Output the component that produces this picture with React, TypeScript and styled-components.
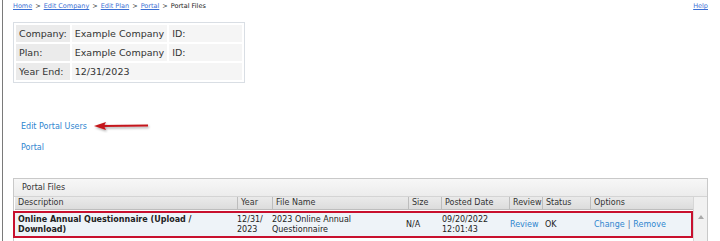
import styled, { createGlobalStyle } from "styled-components";

const GlobalStyle = createGlobalStyle`
  html, body {
    margin: 0;
    padding: 0;
    background: #ffffff;
    font-family: "DejaVu Sans", Verdana, sans-serif;
    color: #222;
  }
`;

const Page = styled.div`
  margin-left: 2px;
  border-left: 1px solid #7a7a7a;
  height: 241px;
  padding: 0 12px 0 10px;
  box-sizing: border-box;
  overflow: hidden;
`;

const TopBar = styled.div`
  display: flex;
  justify-content: space-between;
  align-items: center;
  height: 12px;
  font-size: 6.5px;
  color: #222;
`;

const Crumbs = styled.div`
  display: flex;
  gap: 3px;
  align-items: center;
`;

const CrumbLink = styled.a`
  color: #3b6fd4;
  text-decoration: underline;
`;

const InfoTable = styled.table`
  margin-top: 10px;
  border: 1px solid #d9dee4;
  border-spacing: 2px;
  font-size: 9.5px;
  color: #333;
  width: 232px;
  td {
    height: 17px;
    padding: 0 3px;
    white-space: nowrap;
    background: #f5f5f5;
  }
`;

const LabelCell = styled.td<{ $w: number }>`
  && {
    background: #ebebeb;
  }
  width: ${(p) => p.$w}px;
`;

const ValueCell = styled.td<{ $w?: number }>`
  width: ${(p) => (p.$w ? `${p.$w}px` : "auto")};
`;

const Links = styled.div`
  margin-top: 39px;
  padding-left: 8px;
  display: flex;
  flex-direction: column;
  gap: 11px;
`;

const LinkRow = styled.div`
  display: flex;
  align-items: center;
  gap: 6px;
  height: 10px;
`;

const BlueLink = styled.a`
  color: #2f86cf;
  font-size: 8px;
  line-height: 10px;
  text-decoration: none;
`;

const Panel = styled.div`
  margin-top: 25px;
  border: 1px solid #c9c9c9;
  border-bottom: none;
  width: 695px;
  box-sizing: border-box;
`;

const PanelTitle = styled.div`
  height: 17px;
  line-height: 17px;
  padding-left: 8px;
  font-size: 8px;
  color: #333;
  background: linear-gradient(#f7f7f7, #ececec);
  border-bottom: 1px solid #d4d4d4;
`;

const PanelBody = styled.div`
  display: flex;
`;

const GridArea = styled.div`
  flex: 1;
`;

const HeadRow = styled.div`
  display: grid;
  grid-template-columns: 223px 35px 136px 33px 68px 33px 48px 100px;
  background: linear-gradient(#eaeaea, #dcdcdc);
  border-bottom: 1px solid #bdbdbd;
  margin-left: 1px;
`;

const HeadCell = styled.div`
  height: 12px;
  line-height: 12px;
  padding-left: 3px;
  font-size: 8px;
  color: #333;
  border-right: 1px solid #bdbdbd;
  white-space: nowrap;
  overflow: hidden;
  &:last-child {
    border-right: none;
  }
`;

const DataRow = styled.div`
  display: grid;
  grid-template-columns: 219px 35px 134px 36px 68px 35px 49px 100px;
  align-items: center;
  border: 2px solid #c8102e;
  background: #eef3f8;
  padding: 2px 0;
  margin: 1px 0 0 -1px;
  font-size: 8px;
  line-height: 9.5px;
  color: #222;
`;

const DataCell = styled.div<{ $bold?: boolean }>`
  padding-left: 3px;
  font-weight: ${(p) => (p.$bold ? "bold" : "normal")};
`;

const RowLink = styled.a`
  color: #2f86cf;
  text-decoration: none;
`;

const Sep = styled.span`
  color: #4a6a9a;
  margin: 0 3px;
`;

const Scroll = styled.div`
  width: 15px;
  background: #f1f1f1;
  border-left: 1px solid #d6d6d6;
  display: flex;
  justify-content: center;
  padding-top: 18px;
  min-height: 45px;
  box-sizing: border-box;
`;

const Arrow = () => (
  <svg width="58" height="12" viewBox="0 0 58 12">
    <defs>
      <filter id="sh" x="-20%" y="-50%" width="140%" height="200%">
        <feDropShadow dx="1" dy="1.5" stdDeviation="1" floodColor="#000" floodOpacity="0.35" />
      </filter>
    </defs>
    <g filter="url(#sh)">
      <line x1="10" y1="5" x2="55" y2="4.5" stroke="#c4161c" strokeWidth="2" />
      <polygon points="1,5 13,1 11,5 13,9" fill="#c4161c" />
    </g>
  </svg>
);

export default function App() {
  return (
    <>
      <GlobalStyle />
      <Page>
        <TopBar>
          <Crumbs>
            <CrumbLink>Home</CrumbLink>&gt;
            <CrumbLink>Edit Company</CrumbLink>&gt;
            <CrumbLink>Edit Plan</CrumbLink>&gt;
            <CrumbLink>Portal</CrumbLink>&gt;
            <span>Portal Files</span>
          </Crumbs>
          <CrumbLink>Help</CrumbLink>
        </TopBar>

        <InfoTable>
          <tbody>
            <tr>
              <LabelCell $w={47}>Company:</LabelCell>
              <ValueCell $w={88}>Example Company</ValueCell>
              <ValueCell $w={72}>ID:</ValueCell>
            </tr>
            <tr>
              <LabelCell $w={47}>Plan:</LabelCell>
              <ValueCell $w={88}>Example Company</ValueCell>
              <ValueCell $w={72}>ID:</ValueCell>
            </tr>
            <tr>
              <LabelCell $w={47}>Year End:</LabelCell>
              <ValueCell colSpan={2}>12/31/2023</ValueCell>
            </tr>
          </tbody>
        </InfoTable>

        <Links>
          <LinkRow>
            <BlueLink>Edit Portal Users</BlueLink>
            <Arrow />
          </LinkRow>
          <LinkRow>
            <BlueLink>Portal</BlueLink>
          </LinkRow>
        </Links>

        <Panel>
          <PanelTitle>Portal Files</PanelTitle>
          <PanelBody>
            <GridArea>
              <HeadRow>
                <HeadCell>Description</HeadCell>
                <HeadCell>Year</HeadCell>
                <HeadCell>File Name</HeadCell>
                <HeadCell>Size</HeadCell>
                <HeadCell>Posted Date</HeadCell>
                <HeadCell>Review</HeadCell>
                <HeadCell>Status</HeadCell>
                <HeadCell>Options</HeadCell>
              </HeadRow>
              <DataRow>
                <DataCell $bold>Online Annual Questionnaire (Upload / Download)</DataCell>
                <DataCell>12/31/<br />2023</DataCell>
                <DataCell>2023 Online Annual Questionnaire</DataCell>
                <DataCell>N/A</DataCell>
                <DataCell>09/20/2022 12:01:43</DataCell>
                <DataCell><RowLink>Review</RowLink></DataCell>
                <DataCell>OK</DataCell>
                <DataCell>
                  <RowLink>Change</RowLink>
                  <Sep>|</Sep>
                  <RowLink>Remove</RowLink>
                </DataCell>
              </DataRow>
            </GridArea>
            <Scroll>
              <svg width="6" height="4" viewBox="0 0 6 4">
                <polygon points="0,4 3,0 6,4" fill="#a9a9a9" />
              </svg>
            </Scroll>
          </PanelBody>
        </Panel>
      </Page>
    </>
  );
}
